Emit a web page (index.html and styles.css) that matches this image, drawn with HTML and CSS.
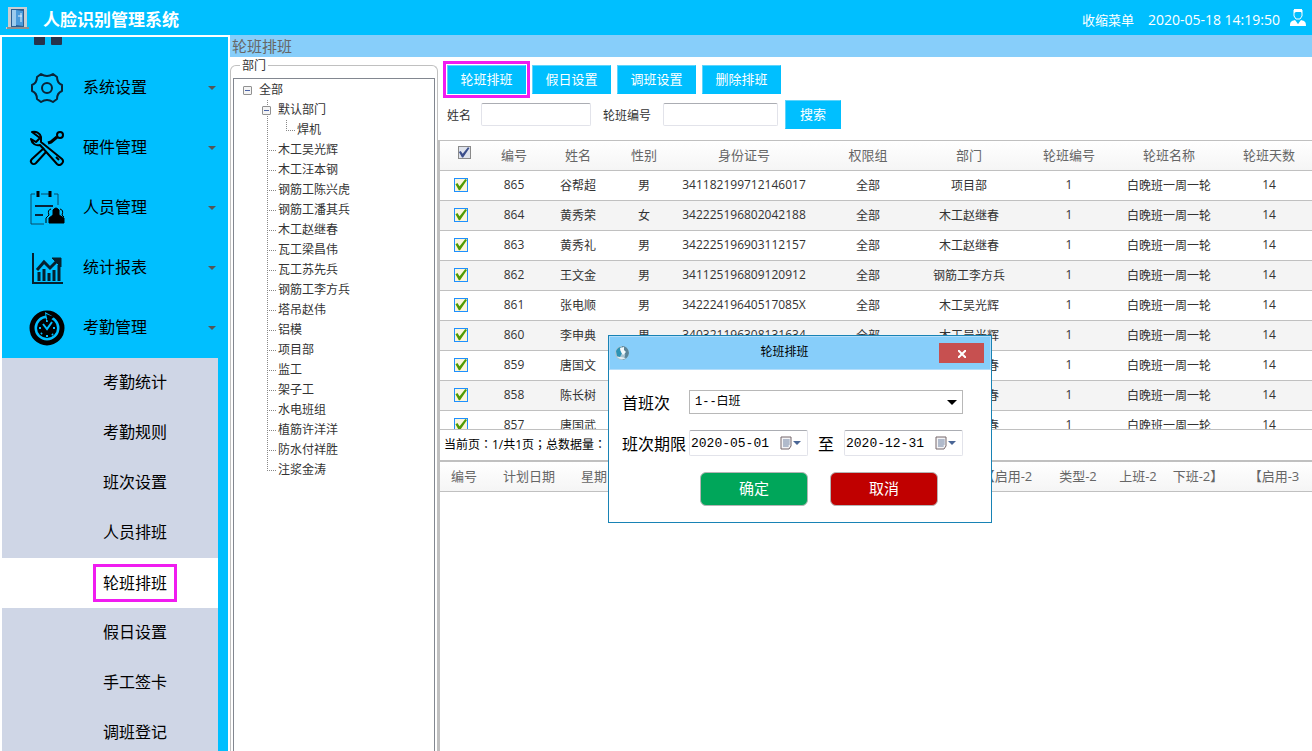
FILE: index.html
```html
<!DOCTYPE html>
<html lang="zh-CN">
  <head>
    <meta charset="UTF-8" />
    <meta name="viewport" content="width=device-width, initial-scale=1.0" />
    <title>人脸识别管理系统</title>
    <link rel="stylesheet" href="styles.css">
  </head>
  <body>
    <header>
      <svg class="logo" viewBox="0 0 24 24">
        <path d="M2 1h19v20h2v2H0v-2h2z" fill="#c9ced2" />
        <path d="M1 21h22v2H1z" fill="#8d8f92" />
        <path d="M5 3h13v18H5z" fill="#2a5d91" />
        <path d="M6 4h4v16H6z" fill="#9ccbed" />
        <path d="M10 4l7 1v15l-7-1z" fill="#4a9bdb" />
        <path d="M15 7v9M12 10h4" stroke="#dff1ff" fill="none" />
      </svg>
      <h1>人脸识别管理系统</h1>
      <a href="#" class="shrink">收缩菜单</a>
      <time>2020-05-18 14:19:50</time>
      <svg class="user" viewBox="0 0 16 18">
        <path d="M4 1h8v6l-2 3H6L4 7z" fill="none" stroke="#fff" />
        <path d="M4 0h8v4l-1-1H6L4 4z" fill="#fff" />
        <path d="M0 17c0-4 1-5 5-6l3 4 3-4c4 1 5 2 5 6z" fill="#fff" />
        <path d="M7 12h2l-1 3z" fill="#00bfff" />
      </svg>
    </header>
    <div class="layout">
      <nav>
        <ul class="menu">
          <li>
            <a href="#">
              <svg class="icon" viewBox="0 0 36 36">
                <path d="M5 5h11v11H5zM20 5h11v11H20zM5 20h11v14q0 1-1 1H6q-1 0-1-1zM22 20h11v14q0 1-1 1h-9q-1 0-1-1z" fill="#26334d" />
              </svg>
            </a>
          </li>
          <li>
            <a href="#">
              <svg class="icon" viewBox="0 0 36 36">
                <path d="M12 4q6 4 12 0l4 3q0 6 5 8v6q-5 2-5 8l-4 3q-6-4-12 0l-4-3q0-6-5-8v-6q5-2 5-8z" fill="none" stroke="#0a2438" stroke-width="2" stroke-linejoin="round" />
                <circle cx="18" cy="18" r="5" fill="none" stroke="#0a2438" stroke-width="2" />
              </svg>
              <span>系统设置</span><i class="caret"></i>
            </a>
          </li>
          <li>
            <a href="#">
              <svg class="icon" viewBox="0 0 36 36" fill="none" stroke="#000" stroke-width="2" stroke-linejoin="round">
                <path d="M3 2c4-1 8 1 9 5v5l21 17c3 3-2 8-5 5L11 15c-4 1-8-1-9-6l5 3 4-4z" />
                <path d="M17 22L7 33c-3 3-7-1-4-4l12-11" />
                <path d="M19 13l3-1 6-5" stroke-width="3" />
                <circle cx="31" cy="5" r="3" />
                <path d="M27 27l3 3" />
              </svg>
              <span>硬件管理</span><i class="caret"></i>
            </a>
          </li>
          <li>
            <a href="#">
              <svg class="icon" viewBox="0 0 36 36" fill="none" stroke="#000">
                <path d="M6 4H2v30h13M12 4h8M25 4h4v11" stroke="#0a4a66" />
                <path d="M9 1v6M21 1v6" stroke-width="3" />
                <path d="M6 16h18M6 25h8" stroke-width="2" stroke="#0a2438" />
                <path d="M24 20q3-4 6 0v5l5 3v5H20v-5l4-3z" fill="#000" />
                <path d="M22 19q-4 1-2 6l-3 3v5" />
                <path d="M31 19q4 1 2 6l2 2" />
              </svg>
              <span>人员管理</span><i class="caret"></i>
            </a>
          </li>
          <li>
            <a href="#">
              <svg class="icon" viewBox="0 0 36 36" fill="none" stroke="#06202e">
                <path d="M4 3v30h30" stroke-width="2" />
                <path d="M10 31v-9M15 31V19M20 31v-8M25 31V20M30 31V15" stroke-width="3" />
                <path d="M8 20l7-8 6 6 8-8" stroke-width="3" />
                <path d="M23 8h9v9z" fill="#06202e" />
              </svg>
              <span>统计报表</span><i class="caret"></i>
            </a>
          </li>
          <li>
            <a href="#">
              <svg class="icon" viewBox="0 0 36 36" fill="none">
                <circle cx="18" cy="18" r="15" stroke="#000" stroke-width="5" />
                <circle cx="18" cy="18" r="10" fill="#000" />
                <path d="M14 14l4 5 5-7M18 10v2M18 25v2M10 18h2M24 18h2M12 24l1-1M23 24l1 1" stroke="#00bfff" stroke-width="2" />
                <path d="M16 2l7 4-6 4z" fill="#00bfff" />
                <path d="M17 4l8 3-6 5z" fill="#000" />
              </svg>
              <span>考勤管理</span><i class="caret"></i>
            </a>
            <ul class="submenu">
              <li><a href="#">考勤统计</a></li>
              <li><a href="#">考勤规则</a></li>
              <li><a href="#">班次设置</a></li>
              <li><a href="#">人员排班</a></li>
              <li class="active"><a href="#"><span>轮班排班</span></a></li>
              <li><a href="#">假日设置</a></li>
              <li><a href="#">手工签卡</a></li>
              <li><a href="#">调班登记</a></li>
            </ul>
          </li>
        </ul>
      </nav>
      <main>
        <h2>轮班排班</h2>
        <div class="panels">
          <fieldset>
            <legend>部门</legend>
            <div class="treebox">
              <ul class="tree">
                <li>
                  <button type="button" class="toggle" aria-label="全部"></button><span>全部</span>
                  <ul>
                    <li>
                      <button type="button" class="toggle" aria-label="默认部门"></button><span>默认部门</span>
                      <ul>
                        <li class="leaf">焊机</li>
                      </ul>
                    </li>
                    <li class="leaf">木工吴光辉</li>
                    <li class="leaf">木工汪本钢</li>
                    <li class="leaf">钢筋工陈兴虎</li>
                    <li class="leaf">钢筋工潘其兵</li>
                    <li class="leaf">木工赵继春</li>
                    <li class="leaf">瓦工梁昌伟</li>
                    <li class="leaf">瓦工苏先兵</li>
                    <li class="leaf">钢筋工李方兵</li>
                    <li class="leaf">塔吊赵伟</li>
                    <li class="leaf">铝模</li>
                    <li class="leaf">项目部</li>
                    <li class="leaf">监工</li>
                    <li class="leaf">架子工</li>
                    <li class="leaf">水电班组</li>
                    <li class="leaf">植筋许洋洋</li>
                    <li class="leaf">防水付祥胜</li>
                    <li class="leaf">注浆金涛</li>
                  </ul>
                </li>
              </ul>
            </div>
          </fieldset>
          <section>
            <div class="toolbar">
              <button type="button" class="btn marked">轮班排班</button>
              <button type="button" class="btn">假日设置</button>
              <button type="button" class="btn">调班设置</button>
              <button type="button" class="btn">删除排班</button>
            </div>
            <form class="search">
              <label for="name">姓名</label>
              <input type="text" id="name" />
              <label for="shift">轮班编号</label>
              <input type="text" id="shift" />
              <button type="button" class="btn">搜索</button>
            </form>
            <div class="grid people">
              <table>
                <colgroup>
                  <col class="w48" /><col class="w52" /><col class="w76" /><col class="w56" /><col class="w144" />
                  <col class="w104" /><col class="w98" /><col class="w102" /><col class="w98" /><col class="w102" />
                </colgroup>
                <thead>
                  <tr>
                    <th><input type="checkbox" class="all" aria-label="全部" checked /></th>
                    <th>编号</th><th>姓名</th><th>性别</th><th>身份证号</th><th>权限组</th>
                    <th>部门</th><th>轮班编号</th><th>轮班名称</th><th>轮班天数</th>
                  </tr>
                </thead>
                <tbody>
                  <tr>
                    <td><input type="checkbox" aria-label="865" checked /></td>
                    <td>865</td><td>谷帮超</td><td>男</td><td>341182199712146017</td><td>全部</td>
                    <td>项目部</td><td>1</td><td>白晚班一周一轮</td><td>14</td>
                  </tr>
                  <tr>
                    <td><input type="checkbox" aria-label="864" checked /></td>
                    <td>864</td><td>黄秀荣</td><td>女</td><td>342225196802042188</td><td>全部</td>
                    <td>木工赵继春</td><td>1</td><td>白晚班一周一轮</td><td>14</td>
                  </tr>
                  <tr>
                    <td><input type="checkbox" aria-label="863" checked /></td>
                    <td>863</td><td>黄秀礼</td><td>男</td><td>342225196903112157</td><td>全部</td>
                    <td>木工赵继春</td><td>1</td><td>白晚班一周一轮</td><td>14</td>
                  </tr>
                  <tr>
                    <td><input type="checkbox" aria-label="862" checked /></td>
                    <td>862</td><td>王文金</td><td>男</td><td>341125196809120912</td><td>全部</td>
                    <td>钢筋工李方兵</td><td>1</td><td>白晚班一周一轮</td><td>14</td>
                  </tr>
                  <tr>
                    <td><input type="checkbox" aria-label="861" checked /></td>
                    <td>861</td><td>张电顺</td><td>男</td><td>34222419640517085X</td><td>全部</td>
                    <td>木工吴光辉</td><td>1</td><td>白晚班一周一轮</td><td>14</td>
                  </tr>
                  <tr>
                    <td><input type="checkbox" aria-label="860" checked /></td>
                    <td>860</td><td>李申典</td><td>男</td><td>340321196308131634</td><td>全部</td>
                    <td>木工吴光辉</td><td>1</td><td>白晚班一周一轮</td><td>14</td>
                  </tr>
                  <tr>
                    <td><input type="checkbox" aria-label="859" checked /></td>
                    <td>859</td><td>唐国文</td><td></td><td></td><td></td>
                    <td>木工赵继春</td><td>1</td><td>白晚班一周一轮</td><td>14</td>
                  </tr>
                  <tr>
                    <td><input type="checkbox" aria-label="858" checked /></td>
                    <td>858</td><td>陈长树</td><td></td><td></td><td></td>
                    <td>木工赵继春</td><td>1</td><td>白晚班一周一轮</td><td>14</td>
                  </tr>
                  <tr>
                    <td><input type="checkbox" aria-label="857" checked /></td>
                    <td>857</td><td>唐国武</td><td></td><td></td><td></td>
                    <td>木工赵继春</td><td>1</td><td>白晚班一周一轮</td><td>14</td>
                  </tr>
                </tbody>
              </table>
            </div>
            <p class="pager" lang="zh-TW">当前页：1/共1页；总数据量：</p>
            <div class="grid plan">
              <table>
                <colgroup>
                  <col class="w48" /><col class="w82" /><col class="w48" /><col /><col class="w66" />
                  <col class="w76" /><col class="w44" /><col class="w76" /><col class="w76" />
                </colgroup>
                <thead>
                  <tr>
                    <th>编号</th><th>计划日期</th><th>星期</th><th></th><th>【启用-2</th>
                    <th>类型-2</th><th>上班-2</th><th>下班-2】</th><th>【启用-3</th>
                  </tr>
                </thead>
              </table>
            </div>
          </section>
        </div>
      </main>
    </div>

    <!-- 排班弹窗 -->
    <div class="dialog" role="dialog" aria-labelledby="dialog-title">
      <div class="titlebar">
        <svg class="globe" viewBox="0 0 16 16">
          <circle cx="8" cy="8" r="7" fill="#a9c3d0" />
          <path d="M8 1q6 0 7 7-1 6-7 7 4-3 3-7L7 4z" fill="#5b8599" />
          <path d="M2 6q2-4 5-4L6 5l2 3-2 4-3-1z" fill="#2b93b5" />
          <path d="M6 3l4-1v3l2 2-3 3-2-3z" fill="#f4fafc" />
          <path d="M3 12q5 4 9 1l-5-1z" fill="#e2edf2" />
        </svg>
        <h3 id="dialog-title">轮班排班</h3>
        <button type="button" class="close" aria-label="×">
          <svg viewBox="0 0 8 8"><path d="M0 0l8 8M8 0L0 8" stroke="#fff" stroke-width="2" /></svg>
        </button>
      </div>
      <form class="fields">
        <div class="row">
          <label for="first">首班次</label>
          <div class="select">
            <select id="first">
              <option>1--白班</option>
            </select>
          </div>
        </div>
        <div class="row">
          <label for="begin">班次期限</label>
          <div class="date">
            <input type="text" id="begin" value="2020-05-01" />
            <svg viewBox="0 0 22 14">
              <path d="M1 1h10v9l-2 3H1z" fill="#f4f4f6" stroke="#75666a" />
              <path d="M3 4h7M3 6h7M3 8h7M3 10h5M4 3v8M6 3v8M8 3v8" stroke="#9aa7bd" />
              <path d="M13 5h8l-4 4z" fill="#4a6696" />
            </svg>
          </div>
          <label for="end" class="to">至</label>
          <div class="date">
            <input type="text" id="end" value="2020-12-31" />
            <svg viewBox="0 0 22 14">
              <path d="M1 1h10v9l-2 3H1z" fill="#f4f4f6" stroke="#75666a" />
              <path d="M3 4h7M3 6h7M3 8h7M3 10h5M4 3v8M6 3v8M8 3v8" stroke="#9aa7bd" />
              <path d="M13 5h8l-4 4z" fill="#4a6696" />
            </svg>
          </div>
        </div>
        <div class="actions">
          <button type="button" class="ok">确定</button>
          <button type="button" class="cancel">取消</button>
        </div>
      </form>
    </div>
  </body>
</html>
```
FILE: styles.css
```css
* {
  box-sizing: border-box;
}
body {
  display: flex;
  flex-direction: column;
  height: 100vh;
  margin: 0;
  overflow: hidden;
  background: #fff;
  color: #333;
  font-family: "Open Sans", "Noto Sans CJK SC", sans-serif;
  font-size: 12px;
}
h1,
h2,
h3,
p,
ul {
  margin: 0;
  padding: 0;
}
ul {
  list-style: none;
}
a {
  color: inherit;
  text-decoration: none;
}
button,
input,
select {
  font-family: inherit;
}
header {
  display: flex;
  flex: none;
  align-items: center;
  height: 35px;
  padding: 4px 6px 0;
  background: #00bfff;
  color: #fff;
}
header h1 {
  flex: 1;
  margin-left: 13px;
  font-size: 17px;
  line-height: 32px;
}
.logo {
  width: 24px;
  height: 24px;
  margin-bottom: 4px;
}
.shrink {
  margin-right: 14px;
  font-size: 13px;
}
time {
  font-size: 14px;
}
.user {
  width: 16px;
  height: 18px;
  margin: 0 0 4px 10px;
}
.layout {
  display: flex;
  flex: 1;
  min-height: 0;
}

/* 左侧菜单 */
nav {
  flex: none;
  width: 230px;
  padding: 2px 2px 0;
  overflow: hidden;
}
.menu {
  background: #00bfff;
  color: #000;
  font-size: 16px;
  overflow: hidden;
}
.menu > li:first-child {
  margin-top: -39px;
}
.menu > li > a {
  display: flex;
  align-items: center;
  height: 60px;
  padding: 0 12px 0 27px;
}
.menu > li > a span {
  flex: 1;
  margin-left: 18px;
  padding-bottom: 4px;
}
.icon {
  width: 36px;
  height: 36px;
}
.caret {
  border: 4px solid transparent;
  border-top-color: #555;
  border-bottom: 0;
}
.submenu {
  margin-right: 10px;
  background: #cfd6e6;
}
.submenu a {
  display: flex;
  align-items: center;
  height: 50px;
  padding: 0 0 4px 101px;
}
.submenu .active {
  background: #fff;
}
.submenu .active a {
  padding-bottom: 0;
}
.submenu span {
  line-height: 18px;
  outline: 3px solid #f01cf0;
  outline-offset: 7px;
}
main {
  display: flex;
  flex: 1;
  flex-direction: column;
  min-width: 0;
}
h2 {
  height: 22px;
  padding-left: 2px;
  background: #87cefa;
  color: #666;
  font-size: 15px;
  font-weight: normal;
  line-height: 22px;
}
.panels {
  display: flex;
  flex: 1;
  min-height: 0;
}

/* 部门树 */
fieldset {
  flex: none;
  width: 208px;
  margin: 0;
  padding: 4px 2px 0;
  border: 1px solid #c0c0c0;
  border-bottom: 0;
  border-radius: 6px 6px 0 0;
}
legend {
  margin-left: 7px;
  padding: 0 2px;
  line-height: 17px;
}
.treebox {
  height: 100%;
  padding: 1px 0 0 9px;
  border: 1px solid #828790;
  border-bottom: 0;
}
.tree,
.leaf {
  line-height: 20px;
}
.tree ul {
  margin-left: 19px;
}
.tree li li {
  background: repeating-linear-gradient(#888 0 1px, transparent 1px 2px) 5px 0 / 1px 100% no-repeat;
}
.tree li .leaf {
  padding-left: 16px;
  background:
    repeating-linear-gradient(#888 0 1px, transparent 1px 2px) 5px 0 / 1px 100% no-repeat,
    repeating-linear-gradient(90deg, #888 0 1px, transparent 1px 2px) 5px 10px / 9px 1px no-repeat;
}
.tree li .leaf:last-child {
  background-size: 1px 11px, 9px 1px;
}
.toggle {
  width: 9px;
  height: 9px;
  margin: 0 7px 0 0;
  padding: 0;
  border: 1px solid #919191;
  border-radius: 1px;
  background: linear-gradient(#4b63a7, #4b63a7) center / 5px 1px no-repeat #f4f4f4;
  vertical-align: 0;
}
section {
  display: flex;
  flex: 1;
  flex-direction: column;
  min-width: 0;
}
.toolbar {
  display: flex;
  gap: 6px;
  padding: 8px 9px 6px;
}
.btn {
  width: 79px;
  height: 29px;
  padding: 0 0 2px;
  border: 1px solid #00bfff;
  border-top-color: #5fd4fb;
  border-left-color: #5fd4fb;
  background: #00bfff;
  color: #fff;
  font-size: 13px;
}
.marked {
  outline: 3px solid #f01cf0;
  outline-offset: 1px;
}
.search {
  display: flex;
  align-items: center;
  padding: 0 9px 11px;
}
.search input {
  width: 110px;
  height: 23px;
  margin: 0 12px 0 10px;
  border: 1px solid #e2e3ea;
  border-top-color: #abadb3;
  border-radius: 2px;
}
.search #shift {
  width: 115px;
  margin: 0 7px 0 12px;
}
.search .btn {
  width: 56px;
}

/* 表格 */
.grid {
  overflow: hidden;
  border-left: 2px solid #c0c0c0;
}
table {
  width: 100%;
  table-layout: fixed;
  border-collapse: collapse;
}
th,
td {
  height: 30px;
  padding: 0;
  border-bottom: 1px solid #c0c0c0;
  text-align: center;
  white-space: nowrap;
}
th {
  height: 29px;
  padding-bottom: 2px;
  background: linear-gradient(#fff, #f5f5f5);
  color: #666;
  font-size: 13px;
  font-weight: normal;
}
td {
  padding-bottom: 1px;
}
tbody tr:nth-child(even) {
  background: #f4f4f4;
}
.people {
  height: 290px;
  border-top: 1px solid #c0c0c0;
  border-bottom: 1px solid #c0c0c0;
}
.people table {
  min-width: 880px;
}
.plan {
  flex: 1;
  border-top: 2px solid #c0c0c0;
}
.w44 { width: 44px; }
.w48 { width: 48px; }
.w52 { width: 52px; }
.w56 { width: 56px; }
.w66 { width: 66px; }
.w76 { width: 76px; }
.w82 { width: 82px; }
.w98 { width: 98px; }
.w102 { width: 102px; }
.w104 { width: 104px; }
.w144 { width: 144px; }
td input,
.all {
  display: block;
  width: 14px;
  height: 14px;
  margin: 0 0 0 14px;
  border: 1px solid #1e90ff;
  background: #fbf5dc;
  appearance: none;
}
.all {
  width: 13px;
  height: 13px;
  margin: 0 auto 4px;
  border-color: #8a8a8a;
  background: #dfe3ec;
}
td input::before,
.all::before {
  content: "";
  display: block;
  height: 100%;
  background: #4f9a06;
  clip-path: polygon(4% 48%, 20% 38%, 38% 64%, 86% 4%, 100% 12%, 42% 98%, 32% 98%);
}
.all::before {
  background: #3c4f8c;
}
.pager {
  height: 30px;
  padding-left: 4px;
  border-left: 2px solid #c0c0c0;
  color: #000;
  font-family: "Open Sans", "Noto Sans CJK TC", sans-serif;
  line-height: 30px;
}

/* 弹窗 */
.dialog {
  position: absolute;
  top: 335px;
  left: 608px;
  width: 384px;
  border: 1px solid #1883b5;
  background: #fff;
  color: #000;
}
.titlebar {
  display: flex;
  align-items: center;
  height: 34px;
  padding: 0 6px 0 4px;
  border: 1px solid #b5defa;
  background: #87cefa;
}
h3 {
  flex: 1;
  padding-bottom: 4px;
  font-size: 12px;
  font-weight: normal;
  text-align: center;
}
.globe {
  width: 16px;
  height: 16px;
}
.close {
  width: 45px;
  height: 20px;
  padding: 0;
  border: 0;
  background: #c75050;
}
.close svg {
  width: 8px;
  height: 8px;
}
.fields {
  padding: 20px 28px 16px 13px;
}
.row {
  display: flex;
  align-items: center;
  height: 24px;
  margin-bottom: 17px;
  font-size: 16px;
}
.row label {
  width: 67px;
  white-space: nowrap;
}
.row .to {
  width: 36px;
  text-align: center;
}
.select {
  position: relative;
  flex: 1;
}
.select::after {
  content: "";
  position: absolute;
  top: 10px;
  right: 6px;
  border: 5px solid transparent;
  border-top-color: #000;
  border-bottom: 0;
  pointer-events: none;
}
select {
  display: block;
  width: 100%;
  height: 24px;
  padding: 0 5px 1px;
  border: 1px solid #b8b8b8;
  background: #fff;
  color: #000;
  font-family: "Liberation Mono", "Noto Sans CJK SC", monospace;
  font-size: 12px;
  appearance: none;
}
.date {
  display: flex;
  flex: 1;
  align-items: center;
  height: 26px;
  padding-right: 5px;
  border: 1px solid #e2e3ea;
  border-top-color: #abadb3;
  border-radius: 2px;
}
.date input {
  flex: 1;
  width: 0;
  padding: 0 1px;
  border: 0;
  background: none;
  color: #000;
  font-family: "Liberation Mono", monospace;
  font-size: 13px;
}
.date svg {
  width: 22px;
  height: 14px;
}
.actions {
  display: flex;
  gap: 22px;
  padding-left: 78px;
}
.actions button {
  width: 108px;
  height: 34px;
  padding-bottom: 4px;
  border: 1px solid #b5b5b5;
  border-radius: 6px;
  color: #fff;
  font-size: 15px;
}
.ok {
  background: #00a65a;
}
.cancel {
  background: #c00000;
}
```
